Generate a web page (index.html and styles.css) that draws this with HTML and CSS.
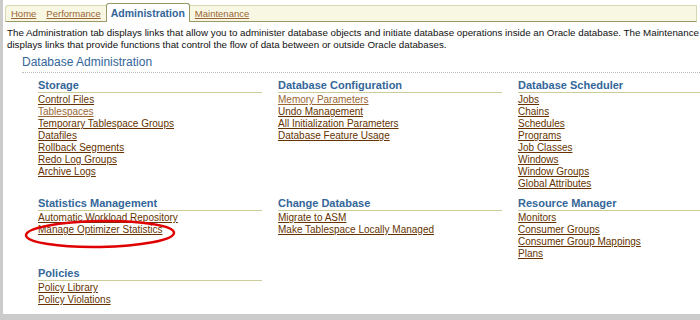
FILE: index.html
```html
<!DOCTYPE html>
<html lang="en">
<head>
    <meta charset="UTF-8">
    <meta name="viewport" content="width=device-width, initial-scale=1.0">
    <title>Administration</title>
    <link rel="stylesheet" href="styles.css">
</head>
<body>
    <div class="frame">
        <div class="tabbar">
            <a class="tab" href="javascript:;">Home</a>
            <a class="tab" href="javascript:;">Performance</a>
            <span class="tab active">Administration</span>
            <a class="tab" href="javascript:;">Maintenance</a>
        </div>

        <p class="intro">The Administration tab displays links that allow you to administer database objects and initiate database operations inside an Oracle database. The Maintenance<br>displays links that provide functions that control the flow of data between or outside Oracle databases.</p>

        <h1 class="page-title">Database Administration</h1>

        <div class="sections">
            <div class="section">
                <h2>Storage</h2>
                <ul>
                    <li><a href="javascript:;">Control Files</a></li>
                    <li><a class="seen" href="javascript:;">Tablespaces</a></li>
                    <li><a href="javascript:;">Temporary Tablespace Groups</a></li>
                    <li><a href="javascript:;">Datafiles</a></li>
                    <li><a href="javascript:;">Rollback Segments</a></li>
                    <li><a href="javascript:;">Redo Log Groups</a></li>
                    <li><a href="javascript:;">Archive Logs</a></li>
                </ul>
            </div>
            <div class="section">
                <h2>Database Configuration</h2>
                <ul>
                    <li><a class="seen" href="javascript:;">Memory Parameters</a></li>
                    <li><a href="javascript:;">Undo Management</a></li>
                    <li><a href="javascript:;">All Initialization Parameters</a></li>
                    <li><a href="javascript:;">Database Feature Usage</a></li>
                </ul>
            </div>
            <div class="section">
                <h2>Database Scheduler</h2>
                <ul>
                    <li><a href="javascript:;">Jobs</a></li>
                    <li><a href="javascript:;">Chains</a></li>
                    <li><a href="javascript:;">Schedules</a></li>
                    <li><a href="javascript:;">Programs</a></li>
                    <li><a href="javascript:;">Job Classes</a></li>
                    <li><a href="javascript:;">Windows</a></li>
                    <li><a href="javascript:;">Window Groups</a></li>
                    <li><a href="javascript:;">Global Attributes</a></li>
                </ul>
            </div>
            <div class="section">
                <h2>Statistics Management</h2>
                <ul>
                    <li><a href="javascript:;">Automatic Workload Repository</a></li>
                    <li><a href="javascript:;">Manage Optimizer Statistics</a></li>
                </ul>
            </div>
            <div class="section">
                <h2>Change Database</h2>
                <ul>
                    <li><a href="javascript:;">Migrate to ASM</a></li>
                    <li><a href="javascript:;">Make Tablespace Locally Managed</a></li>
                </ul>
            </div>
            <div class="section">
                <h2>Resource Manager</h2>
                <ul>
                    <li><a href="javascript:;">Monitors</a></li>
                    <li><a href="javascript:;">Consumer Groups</a></li>
                    <li><a href="javascript:;">Consumer Group Mappings</a></li>
                    <li><a href="javascript:;">Plans</a></li>
                </ul>
            </div>
            <div class="section">
                <h2>Policies</h2>
                <ul>
                    <li><a href="javascript:;">Policy Library</a></li>
                    <li><a href="javascript:;">Policy Violations</a></li>
                </ul>
            </div>
        </div>

        <!-- hand drawn highlight -->
        <svg class="mark" width="697" height="314" viewBox="0 0 697 314">
            <ellipse cx="97" cy="234" rx="74" ry="13" transform="rotate(-1 97 234)" fill="none" stroke="#e00000" stroke-width="2.5"/>
        </svg>
    </div>
</body>
</html>
```

FILE: styles.css
```css
* {
    padding: 0;
    margin: 0;
    box-sizing: border-box;
}

body {
    background: #cbcbcb;
    font-family: "Liberation Sans", Arial, sans-serif;
    overflow: hidden;
}

.frame {
    position: relative;
    height: 314px;
    margin-left: 3px;
    background: #fff;
    overflow: hidden;
}

.tabbar {
    display: flex;
    height: 17px;
    margin: 5px 3px 0 2px;
    background: #f7f7e4;
    border: 1px solid #d6d6b0;
    border-bottom-color: #999966;
    border-radius: 3px 0 0 0;
}

.tab {
    display: flex;
    align-items: center;
    padding: 0 5px;
    font-size: 9.5px;
    color: #996633;
}

.tab.active {
    margin: -3px 0 -1px 0;
    padding: 0 4px;
    background: #fff;
    border: 1px solid #999966;
    border-bottom: none;
    border-radius: 3px 3px 0 0;
    color: #336699;
    font-size: 10.5px;
    font-weight: bold;
}

.intro {
    margin: 5px 0 0 4px;
    font-size: 9.75px;
    line-height: 12px;
    white-space: nowrap;
    color: #111;
}

.page-title {
    margin: 4px 0 0 19px;
    padding-bottom: 3px;
    font-size: 12px;
    line-height: 14px;
    font-weight: normal;
    color: #336699;
    border-bottom: 1px dotted #bbb;
}

.sections {
    display: grid;
    grid-template-columns: repeat(3, 224px);
    column-gap: 16px;
    row-gap: 7px;
    margin: 6px 0 0 35px;
}

.section h2 {
    margin-bottom: 1px;
    font-size: 11px;
    line-height: 13px;
    color: #336699;
    border-bottom: 1px solid #cccc99;
}

.section ul {
    list-style: none;
}

.section li {
    font-size: 10px;
    line-height: 12px;
}

.section a {
    color: #663300;
}

.section a.seen {
    color: #996633;
}

.mark {
    position: absolute;
    top: 0;
    left: 0;
    pointer-events: none;
}
```
